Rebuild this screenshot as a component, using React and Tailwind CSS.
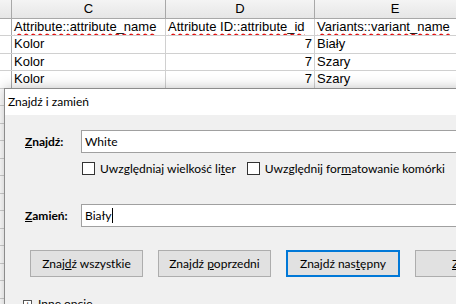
import React from "react";

const rows = [
  ["Kolor", "7", "Biały"],
  ["Kolor", "7", "Szary"],
  ["Kolor", "7", "Szary"],
];

function HeaderCell({ w, label, last }) {
  return (
    <div
      className={`${w} h-full flex items-center justify-center shrink-0 ${
        last ? "" : "border-r border-[#a8a8a8]"
      }`}
    >
      {label}
    </div>
  );
}

function Checkbox({ children }) {
  return (
    <label className="flex items-center gap-[5px]">
      <span className="w-[13px] h-[13px] border border-[#333] bg-white shrink-0" />
      <span>{children}</span>
    </label>
  );
}

function Button({ children, focused, w }) {
  return (
    <div
      className={`${w} h-[27px] shrink-0 flex items-center justify-center bg-[#e1e1e1] ${
        focused ? "border-2 border-[#0078d7]" : "border border-[#adadad]"
      }`}
    >
      {children}
    </div>
  );
}

export default function App() {
  return (
    <div className="relative w-[456px] h-[304px] overflow-hidden bg-white font-['Liberation_Sans',Arial,sans-serif] text-[13px] text-black">
      {/* column headers */}
      <div className="flex h-[19px] bg-gradient-to-b from-[#f4f4f4] to-[#e6e6e6] border-b border-[#a8a8a8]">
        <HeaderCell w="w-[12px]" label="" />
        <HeaderCell w="w-[154px]" label="C" />
        <HeaderCell w="w-[149px]" label="D" />
        <HeaderCell w="w-[160px]" label="E" last />
      </div>

      {/* title row */}
      <div className="flex h-[17px] border-b border-[#d0d0d0]">
        <div className="w-[12px] shrink-0 border-r border-[#a8a8a8]" />
        <div className="w-[154px] shrink-0 border-r border-[#d0d0d0] px-[2px] leading-[16px] whitespace-nowrap overflow-hidden underline decoration-wavy decoration-[#e00000] underline-offset-2">
          Attribute::attribute_name
        </div>
        <div className="w-[149px] shrink-0 border-r border-[#d0d0d0] px-[2px] leading-[16px] whitespace-nowrap overflow-hidden underline decoration-wavy decoration-[#e00000] underline-offset-2">
          Attribute ID::attribute_id
        </div>
        <div className="w-[160px] shrink-0 px-[2px] leading-[16px] whitespace-nowrap overflow-hidden underline decoration-wavy decoration-[#e00000] underline-offset-2">
          Variants::variant_name
        </div>
      </div>

      {rows.map((r, i) => (
        <div key={i} className="flex h-[17.5px] border-b border-[#d0d0d0]">
          <div className="w-[12px] shrink-0 border-r border-[#a8a8a8]" />
          <div className="w-[154px] shrink-0 border-r border-[#d0d0d0] px-[2px] leading-[16px]">
            {r[0]}
          </div>
          <div className="w-[149px] shrink-0 border-r border-[#d0d0d0] px-[2px] leading-[16px] text-right">
            {r[1]}
          </div>
          <div className="w-[160px] shrink-0 px-[2px] leading-[16px]">{r[2]}</div>
        </div>
      ))}
      {Array.from({ length: 12 }).map((_, i) => (
        <div key={"e" + i} className="flex h-[17.5px] border-b border-[#d0d0d0]">
          <div className="w-[12px] shrink-0 border-r border-[#a8a8a8]" />
        </div>
      ))}

      {/* find & replace dialog */}
      <div className="absolute left-[4px] top-[88px] w-[470px] h-[240px] border border-[#8c8c8c] bg-[#f0f0f0] shadow-[0_0_12px_rgba(0,0,0,0.25)] font-['Lato',sans-serif] text-[12px] text-black">
        <div className="h-[26px] bg-white flex items-center pl-[3px]">Znajdź i zamień</div>

        <div className="pl-[20px] pt-[15px]">
          <div className="flex items-center h-[23px]">
            <span className="w-[56px] font-bold">
              <span className="underline">Z</span>najdź:
            </span>
            <div className="flex-1 h-[23px] bg-white border border-[#a0a0a0] flex items-center pl-[3px]">
              White
            </div>
          </div>
          <div className="flex items-center gap-[11px] ml-[57px] mt-[9px] h-[13px]">
            <Checkbox>
              Uwzględniaj wielkość li<span className="underline">t</span>er
            </Checkbox>
            <Checkbox>
              Uwzględnij for<span className="underline">m</span>atowanie komórki
            </Checkbox>
          </div>

          <div className="flex items-center h-[23px] mt-[29px]">
            <span className="w-[56px] font-bold">
              <span className="underline">Z</span>amień:
            </span>
            <div className="flex-1 h-[23px] bg-white border border-[#a0a0a0] flex items-center pl-[3px]">
              Biały<span className="inline-block w-px h-[15px] bg-black ml-px" />
            </div>
          </div>

          <div className="flex gap-[15px] ml-[5px] mt-[23px]">
            <Button w="w-[113px]">
              <span>
                Znaj<span className="underline">d</span>ź wszystkie
              </span>
            </Button>
            <Button w="w-[113px]">
              <span>
                Znajdź <span className="underline">p</span>oprzedni
              </span>
            </Button>
            <Button w="w-[114px]" focused>
              <span>
                Znajdź nas<span className="underline">t</span>ępny
              </span>
            </Button>
            <Button w="w-[113px]">
              <span>
                <span className="underline">Z</span>amień
              </span>
            </Button>
          </div>

          <div className="flex items-center gap-[6px] mt-[18px] -ml-[2px]">
            <span className="w-[9px] h-[9px] border border-[#555] bg-white flex items-center justify-center text-[9px] leading-none">
              +
            </span>
            <span>Inne opcje</span>
          </div>
        </div>
      </div>
    </div>
  );
}
